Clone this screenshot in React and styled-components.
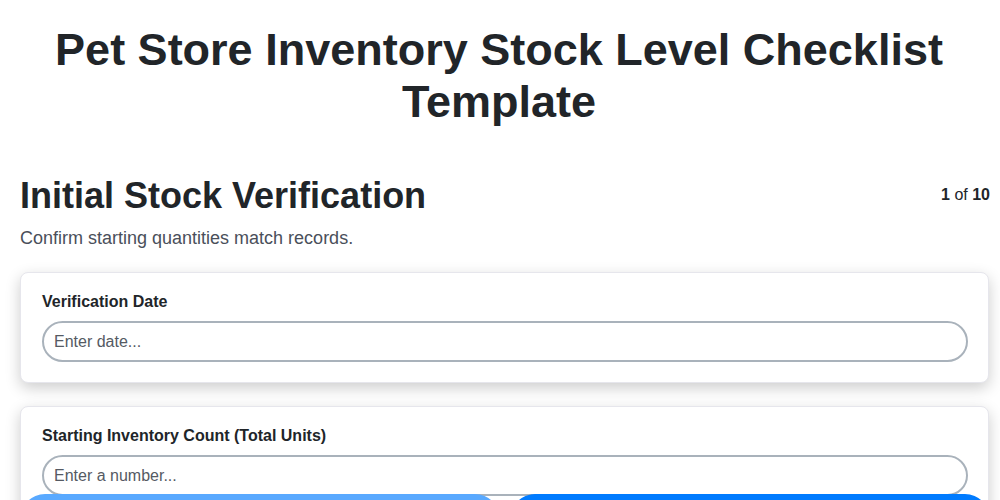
import React from "react";
import styled, { createGlobalStyle } from "styled-components";

const Global = createGlobalStyle`
  html, body { margin: 0; padding: 0; background: #fff; }
  body { font-family: "Liberation Sans", Arial, sans-serif; color: #212529; }
  * { box-sizing: border-box; }
`;

const Page = styled.div`
  padding: 0 11px 80px 20px;
`;

const Title = styled.h1`
  margin: 24px 0 0 -20px;
  padding: 0 0 0 9px;
  font-size: 45px;
  line-height: 52px;
  font-weight: 700;
  text-align: center;
  color: #212529;
`;

const StepHeader = styled.div`
  display: flex;
  justify-content: space-between;
  align-items: flex-start;
  margin-top: 47px;
`;

const StepTitle = styled.h2`
  margin: 0;
  font-size: 36px;
  font-weight: 700;
  color: #212529;
`;

const Counter = styled.div`
  font-size: 16px;
  color: #212529;
  margin-top: 11px;
  margin-right: -1px;
  b { font-weight: 700; }
`;

const Description = styled.p`
  margin: 11px 0 23px;
  font-size: 18px;
  color: #4a4f5a;
`;

const Card = styled.div`
  background: #fff;
  border: 1px solid #e6e6ec;
  border-radius: 8px;
  box-shadow: 0 5px 15px rgba(0, 0, 0, 0.2);
  padding: 20px 20px 20px 21px;
  margin-bottom: 23px;
`;

const Label = styled.label`
  display: block;
  font-size: 16px;
  font-weight: 700;
  color: #212529;
  margin-bottom: 10px;
`;

const Input = styled.input`
  display: block;
  width: 100%;
  height: 41px;
  padding: 0 10px;
  border: 2px solid #a9b2bb;
  border-radius: 22px;
  font-family: "Liberation Sans", Arial, sans-serif;
  font-size: 16px;
  color: #212529;
  outline: none;
  background: #fff;
  &::placeholder { color: #555a63; }
`;

const Nav = styled.div`
  position: fixed;
  left: 20px;
  right: 10px;
  bottom: -44px;
  display: flex;
  gap: 10px;
`;

const NavButton = styled.button`
  flex: 1;
  height: 50px;
  padding-top: 14px;
  border: none;
  border-radius: 25px;
  background: ${(p) => (p.disabled ? "#59a9ff" : "#007bff")};
  color: #fff;
  font-family: "Liberation Sans", Arial, sans-serif;
  font-size: 16px;
  font-weight: 700;
`;

export default function App() {
  return (
    <>
      <Global />
      <Page>
        <Title>Pet Store Inventory Stock Level Checklist Template</Title>
        <StepHeader>
          <StepTitle>Initial Stock Verification</StepTitle>
          <Counter>
            <b>1</b> of <b>10</b>
          </Counter>
        </StepHeader>
        <Description>Confirm starting quantities match records.</Description>
        <Card>
          <Label>Verification Date</Label>
          <Input type="text" placeholder="Enter date..." />
        </Card>
        <Card>
          <Label>Starting Inventory Count (Total Units)</Label>
          <Input type="text" placeholder="Enter a number..." />
        </Card>
        <Card>
          <Label>Notes</Label>
          <Input type="text" placeholder="Enter text..." />
        </Card>
      </Page>
      <Nav>
        <NavButton disabled>Previous</NavButton>
        <NavButton>Next</NavButton>
      </Nav>
    </>
  );
}
